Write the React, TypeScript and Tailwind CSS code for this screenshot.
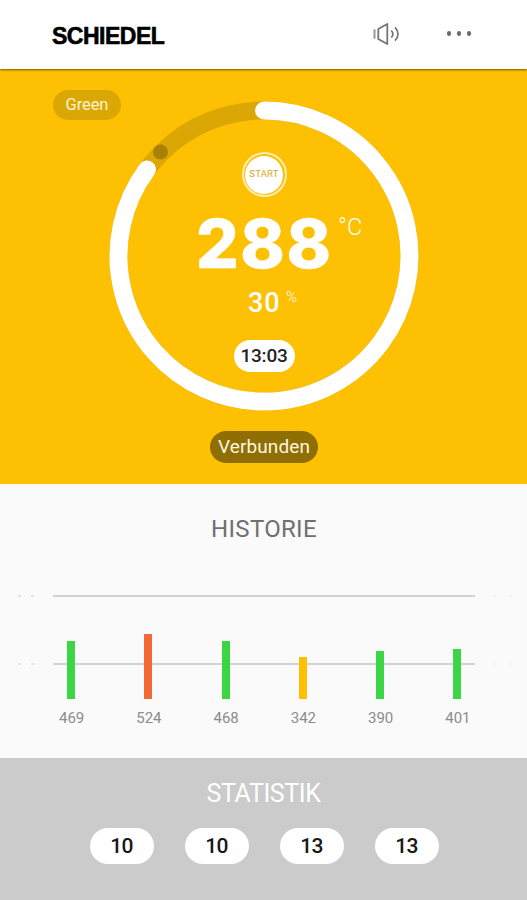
import { clsx } from "clsx";

const history = [
  { value: 469, height: 58, color: "bg-[#3bd545]" },
  { value: 524, height: 65, color: "bg-[#f46a37]" },
  { value: 468, height: 58, color: "bg-[#3bd545]" },
  { value: 342, height: 42, color: "bg-[#fdc002]" },
  { value: 390, height: 48, color: "bg-[#3bd545]" },
  { value: 401, height: 50, color: "bg-[#3bd545]" },
];

const stats = [10, 10, 13, 13];

function SoundIcon() {
  return (
    <svg width="28" height="24" viewBox="0 0 28 24" fill="none" stroke="#757575">
      <path d="M1.500 7.300v9.400" strokeWidth="2" stroke="#969696" />
      <path d="M5.300 7v10L14.300 22V2z" strokeWidth="1.800" strokeLinejoin="round" />
      <path d="M18.300 8.500c1.900 2.100 1.900 5 0 7" strokeWidth="1.700" />
      <path d="M22 5.300c4 4 4 9.400 0 13.400" strokeWidth="1.700" />
    </svg>
  );
}

function Header() {
  return (
    <header className="relative z-10 flex h-[69px] items-center justify-between bg-white pl-[52px] pr-[55px] pb-[2px] shadow-[0_1px_2px_rgba(0,0,0,0.55)]">
      <span className="mt-[5px] font-['Liberation_Sans',sans-serif] text-[23px] leading-none font-bold tracking-[-0.5px] text-black [-webkit-text-stroke:0.6px_black]">
        SCHIEDEL
      </span>
      <div className="flex items-center">
        <SoundIcon />
        <div className="mr-[1px] ml-[46px] flex gap-[5.500px]">
          <span className="size-[4.500px] rounded-full bg-[#6b6b6b]" />
          <span className="size-[4.500px] rounded-full bg-[#6b6b6b]" />
          <span className="size-[4.500px] rounded-full bg-[#6b6b6b]" />
        </div>
      </div>
    </header>
  );
}

function Ring() {
  return (
    <svg className="[grid-area:1/1]" width="310" height="310" viewBox="0 0 310 310" fill="none">
      <circle cx="155" cy="155" r="145.500" stroke="#dba705" strokeWidth="18" />
      <circle cx="51.500" cy="51" r="7.500" fill="#a98105" />
      <path
        d="M155 9.500A145.500 145.500 0 1 1 38 68.500"
        stroke="white"
        strokeWidth="18"
        strokeLinecap="round"
      />
    </svg>
  );
}

function Gauge() {
  return (
    <section className="flex h-[415px] flex-col bg-[#fec002] pt-[21px]">
      <span className="ml-[53px] flex h-[30px] w-[68px] items-center justify-center rounded-full bg-[#dba705] text-[16.500px] tracking-[-0.1px] text-[#fff3d0]">
        Green
      </span>
      <div className="-mt-[19px] ml-[109px] grid size-[310px] shrink-0">
        <Ring />
        <div className="flex flex-col items-center pt-[51px] [grid-area:1/1]">
          <button className="flex size-[45px] items-center justify-center rounded-full border-2 border-[#ffedb3]">
            <span className="flex size-[38px] items-center justify-center rounded-full bg-white text-[9.500px] tracking-[0.2px] text-[#dca41c]">
              START
            </span>
          </button>
          <div className="mt-[17px] flex h-[60px] w-full pl-[87px] text-white">
            <span className="w-[142px] font-['Inter',sans-serif] text-[67px] leading-[60px] font-extrabold tracking-[1.600px] [-webkit-text-stroke:0.6px_white]">
              288
            </span>
            <span className="mt-[1px] text-[23.500px] leading-[24px] font-light">°C</span>
          </div>
          <div className="mt-[15px] flex h-[28px] w-full pl-[139px] text-white">
            <span className="w-[38px] text-[27px] leading-[28px] font-medium tracking-[1px]">30</span>
            <span className="text-[15px] leading-[16px] font-light">%</span>
          </div>
          <span className="mt-[23px] flex h-[32px] w-[61px] items-center justify-center rounded-full bg-white text-[19px] font-medium tracking-[-0.2px] text-[#222]">
            13:03
          </span>
        </div>
      </div>
      <span className="mt-[20px] ml-[210px] flex h-[32px] w-[108px] shrink-0 items-center justify-center rounded-full bg-[#8f6e04] text-[19px] tracking-[0.1px] text-[#fff6df]">
        Verbunden
      </span>
    </section>
  );
}

function GridLine({ className }: { className?: string }) {
  return (
    <div className={clsx("flex h-[2px] items-center", className)}>
      <span className="ml-[18px] h-[2px] w-[3px] bg-[#e2e2e2]" />
      <span className="ml-[10px] h-[2px] w-[3px] bg-[#e2e2e2]" />
      <span className="ml-[19px] h-[2px] w-[422px] bg-[#d2d2d2]" />
      <span className="ml-[19px] h-[2px] w-[2px] bg-[#efefef]" />
      <span className="ml-[14px] h-[2px] w-[2px] bg-[#efefef]" />
    </div>
  );
}

function History() {
  return (
    <section className="h-[274px] bg-[#fafafa] pt-[31px]">
      <h2 className="pl-[1px] text-center text-[24px] leading-[28px] tracking-[0.3px] text-[#707070]">
        HISTORIE
      </h2>
      <div className="mt-[52px] grid h-[134px]">
        <div className="[grid-area:1/1]">
          <GridLine />
          <GridLine className="mt-[66px]" />
        </div>
        <div className="flex items-end pl-[32.500px] [grid-area:1/1]">
          {history.map((item) => (
            <div key={item.value} className="flex w-[77.25px] flex-col items-center">
              <div className={clsx("w-[8px]", item.color)} style={{ height: item.height }} />
              <span className="mt-[10px] mb-[2.500px] pl-[1px] text-[15px] leading-[18px] text-[#8c8c8c]">
                {item.value}
              </span>
            </div>
          ))}
        </div>
      </div>
    </section>
  );
}

function Stats() {
  return (
    <section className="h-[142px] bg-[#cbcbcb] pt-[22px]">
      <h2 className="text-center text-[25px] leading-[28px] tracking-[-0.4px] text-white">
        STATISTIK
      </h2>
      <div className="mt-[20px] flex justify-center gap-[31px] pl-[1px]">
        {stats.map((value, i) => (
          <span
            key={i}
            className="flex h-[36px] w-[64px] items-center justify-center rounded-full bg-white pt-[1px] text-[21px] font-medium tracking-[-0.8px] text-[#171717]"
          >
            {value}
          </span>
        ))}
      </div>
    </section>
  );
}

export default function App() {
  return (
    <main className="h-[900px] w-[527px] overflow-hidden bg-white font-['Roboto',sans-serif]">
      <Header />
      <Gauge />
      <History />
      <Stats />
    </main>
  );
}
